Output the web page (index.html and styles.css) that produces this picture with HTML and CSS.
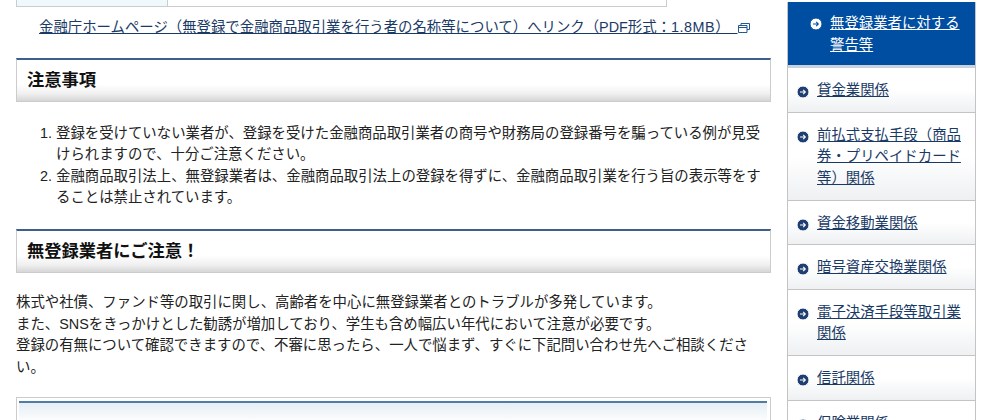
FILE: index.html
```html
<!DOCTYPE html>
<html lang="ja">
<head>
    <meta charset="UTF-8">
    <title>無登録業者に対する警告等</title>
    <link rel="stylesheet" href="styles.css">
</head>
<body>
    <svg class="icon-defs" width="0" height="0">
        <symbol id="arrow" viewBox="0 0 12 12">
            <circle cx="6" cy="6" r="6"/>
            <path d="M3 6h5.2M6.2 3.9 8.3 6 6.2 8.1" fill="none" stroke-width="1.1"/>
        </symbol>
    </svg>

    <div class="page">
        <div class="main">
            <div class="top-table">
                <div class="top-cell-head"></div>
                <div class="top-cell"></div>
            </div>

            <p class="pdf-link">
                <a href="#">金融庁ホームページ（無登録で金融商品取引業を行う者の名称等について）へリンク（PDF形式：<span class="size">1.8MB</span>）&nbsp;&nbsp;</a><svg class="ext-icon" width="12" height="10" viewBox="0 0 12 10"><path d="M3 2.500V.5h8.500v6H9M.5 2.500h8.500v7H.5zM.5 4.500h8.500" fill="none" stroke="#1f5a94"/></svg>
            </p>

            <h2 class="heading">注意事項</h2>
            <ol class="notes">
                <li>登録を受けていない業者が、登録を受けた金融商品取引業者の商号や財務局の登録番号を騙っている例が見受けられますので、十分ご注意ください。</li>
                <li>金融商品取引法上、無登録業者は、金融商品取引法上の登録を得ずに、金融商品取引業を行う旨の表示等をすることは禁止されています。</li>
            </ol>

            <h2 class="heading">無登録業者にご注意！</h2>
            <p class="lead">
                株式や社債、ファンド等の取引に関し、高齢者を中心に無登録業者とのトラブルが多発しています。<br>
                また、SNSをきっかけとした勧誘が増加しており、学生も含め幅広い年代において注意が必要です。<br>
                登録の有無について確認できますので、不審に思ったら、一人で悩まず、すぐに下記問い合わせ先へご相談ください。
            </p>

            <div class="contact-box">
                <div class="contact-inner"></div>
            </div>
        </div>

        <ul class="side-nav">
            <li class="active"><svg class="bullet"><use href="#arrow"/></svg><a href="#">無登録業者に対する警告等</a></li>
            <li><svg class="bullet"><use href="#arrow"/></svg><a href="#">貸金業関係</a></li>
            <li><svg class="bullet"><use href="#arrow"/></svg><a href="#">前払式支払手段（商品券・プリペイドカード等）関係</a></li>
            <li><svg class="bullet"><use href="#arrow"/></svg><a href="#">資金移動業関係</a></li>
            <li><svg class="bullet"><use href="#arrow"/></svg><a href="#">暗号資産交換業関係</a></li>
            <li><svg class="bullet"><use href="#arrow"/></svg><a href="#">電子決済手段等取引業関係</a></li>
            <li><svg class="bullet"><use href="#arrow"/></svg><a href="#">信託関係</a></li>
            <li><svg class="bullet"><use href="#arrow"/></svg><a href="#">保険業関係</a></li>
        </ul>
    </div>
</body>
</html>
```

FILE: styles.css
```css
html, body {
    height: 420px;
    overflow: hidden;
}

body {
    margin: 0;
    background: #fff;
    color: #222;
    font-family: "Liberation Sans", "Noto Sans CJK JP", sans-serif;
    font-size: 14.4px;
    line-height: 21.6px;
}

a {
    color: #1a3a66;
}

.icon-defs {
    position: absolute;
}

.page {
    display: flex;
    align-items: flex-start;
    padding: 0 16px;
}

.main {
    width: 755px;
    flex-shrink: 0;
}

.top-table {
    display: flex;
    width: 649px;
    height: 6px;
    border: 1px solid #ccc;
    border-top: none;
}

.top-cell-head {
    width: 150px;
    background: #eef8fd;
    border-right: 1px solid #ccc;
}

.top-cell {
    flex: 1;
}

.pdf-link {
    margin: 10px 0 0;
    padding-left: 23px;
    white-space: nowrap;
}

.size {
    letter-spacing: .5px;
}

.ext-icon {
    vertical-align: -1px;
}

.heading {
    margin: 0;
    height: 41px;
    padding: 0 10px;
    border: 1px solid #ccc;
    border-top: 2px solid #3d5f8a;
    background: linear-gradient(#fff 60%, #f0f0f0 82%, #d6d6d6);
    color: #111;
    font-size: 17.28px;
    line-height: 41px;
    font-weight: bold;
}

.pdf-link + .heading {
    margin-top: 19px;
}

.notes {
    margin: 21px 0 20px;
    padding-left: 40px;
}

.lead {
    margin: 19px 0 0;
}

.contact-box {
    margin-top: 19px;
    padding: 3px 3px 0 2px;
    border: 1px solid #ccc;
    height: 60px;
}

.contact-inner {
    height: 100%;
    border-top: 2px solid #4f7da6;
    background: linear-gradient(#e6eef5, #fff 20px);
}

.side-nav {
    width: 187px;
    flex-shrink: 0;
    margin: 2px 0 0 16px;
    padding: 0;
    list-style: none;
    border: 1px solid #c4c4c4;
    border-top: none;
}

.side-nav li {
    position: relative;
    padding: 12px 12px 10px 29px;
    border-bottom: 1px solid #c4c4c4;
    background: linear-gradient(#fff 50%, #eef0f2);
}

.bullet {
    position: absolute;
    left: 9px;
    top: 18px;
    width: 12px;
    height: 12px;
    fill: #1f3f72;
    stroke: #fff;
}

.side-nav .active {
    padding: 11px 12px 9px 42px;
    background: #004ea2;
    border-bottom: 3px solid #c9d3dd;
}

.side-nav .active a {
    color: #fff;
}

.side-nav .active .bullet {
    left: 22px;
    top: 16px;
    fill: #fff;
    stroke: #004ea2;
}
```
